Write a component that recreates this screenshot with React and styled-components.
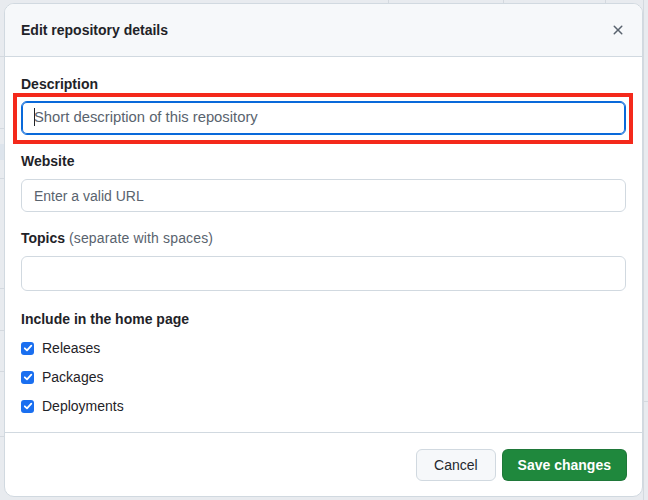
import React from "react";
import styled, { createGlobalStyle } from "styled-components";

const Global = createGlobalStyle`
  html, body { margin: 0; padding: 0; }
  body {
    font-family: "Liberation Sans", Arial, sans-serif;
    -webkit-font-smoothing: antialiased;
  }
  * { box-sizing: border-box; }
`;

const Page = styled.div`
  position: relative;
  width: 648px;
  height: 500px;
  overflow: hidden;
  background: #e8ebef;
  padding: 3px 5px 3px 4px;
  display: flex;
`;

const BgLine = styled.div`
  position: absolute;
  left: ${(p) => p.$x}px;
  top: ${(p) => p.$y}px;
  width: ${(p) => p.$w}px;
  height: ${(p) => p.$h || 1}px;
  background: ${(p) => p.$c || "#d4d9df"};
`;

const Modal = styled.div`
  position: relative;
  z-index: 1;
  flex: 1;
  display: flex;
  flex-direction: column;
  background: #ffffff;
  border: 1px solid #d1d9e0;
  border-radius: 10px;
  overflow: hidden;
  color: #1f2328;
`;

const Header = styled.header`
  height: 53px;
  flex: none;
  display: flex;
  align-items: center;
  justify-content: space-between;
  padding: 0 8px 0 16px;
  background: #f6f8fa;
  border-bottom: 1px solid #d1d9e0;
`;

const Title = styled.h1`
  margin: 0;
  font-size: 14px;
  font-weight: 700;
  line-height: 20px;
  color: #1f2328;
`;

const CloseButton = styled.button`
  width: 32px;
  height: 32px;
  border: 0;
  background: transparent;
  display: flex;
  align-items: center;
  justify-content: center;
  color: #59636e;
  padding: 0;
`;

const Body = styled.div`
  flex: 1;
  padding: 17px 16px 16px;
  display: flex;
  flex-direction: column;
`;

const Group = styled.div`
  display: flex;
  flex-direction: column;
  margin-bottom: ${(p) => p.$mb ?? 16}px;
`;

const Label = styled.label`
  font-size: 14px;
  font-weight: 700;
  line-height: 20px;
  color: #1f2328;
  margin-bottom: ${(p) => p.$mb ?? 8}px;
`;

const Hint = styled.span`
  font-weight: 400;
  color: #59636e;
  letter-spacing: 0.15px;
`;

const InputWrap = styled.div`
  position: relative;
  ${(p) =>
    p.$annotated &&
    `
    &::after {
      content: "";
      position: absolute;
      left: -8px;
      right: -7px;
      top: -8px;
      bottom: -9px;
      border: 4px solid #f4291b;
      pointer-events: none;
    }
  `}
`;

const Input = styled.input`
  display: block;
  width: 100%;
  height: ${(p) => p.$h || 33}px;
  padding: 0 12px ${(p) => (p.$focused ? 2 : 0)}px;
  font-family: inherit;
  font-size: ${(p) => p.$fs || 14}px;
  color: #1f2328;
  background: #ffffff;
  border: 1px solid ${(p) => (p.$focused ? "#0969da" : "#d1d9e0")};
  box-shadow: ${(p) => (p.$focused ? "inset 0 0 0 1px #0969da" : "none")};
  border-radius: 6px;
  outline: none;
  &::placeholder {
    color: #59636e;
    opacity: 1;
  }
`;

const Caret = styled.span`
  position: absolute;
  left: 13px;
  top: 7px;
  width: 1px;
  height: 18px;
  background: #1f2328;
`;

const CheckList = styled.div`
  display: flex;
  flex-direction: column;
  gap: 9px;
`;

const CheckRow = styled.label`
  display: flex;
  align-items: center;
  gap: 8px;
  height: 20px;
  font-size: 14px;
  color: #1f2328;
`;

const Box = styled.span`
  width: 13px;
  height: 13px;
  border-radius: 3px;
  background: #1a6ff0;
  display: flex;
  align-items: center;
  justify-content: center;
  flex: none;
`;

const Footer = styled.footer`
  flex: none;
  display: flex;
  justify-content: flex-end;
  gap: 6px;
  padding: 16px 15px 16px 16px;
  border-top: 1px solid #d1d9e0;
`;

const Button = styled.button`
  height: 32px;
  padding: 0 ${(p) => (p.$primary ? 15 : 17)}px;
  border-radius: 6px;
  font-family: inherit;
  font-size: 14px;
  font-weight: ${(p) => (p.$primary ? 700 : 500)};
  border: 1px solid ${(p) => (p.$primary ? "rgba(31,35,40,0.15)" : "#d1d9e0")};
  background: ${(p) => (p.$primary ? "#1f883d" : "#f6f8fa")};
  color: ${(p) => (p.$primary ? "#ffffff" : "#25292e")};
`;

const XIcon = () => (
  <svg width="16" height="16" viewBox="0 0 16 16" fill="currentColor">
    <path d="M3.72 3.72a.75.75 0 0 1 1.06 0L8 6.94l3.22-3.22a.749.749 0 0 1 1.275.326.749.749 0 0 1-.215.734L9.06 8l3.22 3.22a.749.749 0 0 1-.326 1.275.749.749 0 0 1-.734-.215L8 9.06l-3.22 3.22a.751.751 0 0 1-1.042-.018.751.751 0 0 1-.018-1.042L6.94 8 3.72 4.78a.75.75 0 0 1 0-1.06Z" />
  </svg>
);

const Check = () => (
  <svg width="10" height="10" viewBox="0 0 10 10" fill="none">
    <path d="M1.8 5.3 L4 7.4 L8.3 2.6" stroke="#fff" strokeWidth="1.8" strokeLinecap="round" strokeLinejoin="round" />
  </svg>
);

const options = ["Releases", "Packages", "Deployments"];

export default function App() {
  return (
    <>
      <Global />
      <Page>
        <BgLine $x={0} $y={56} $w={4} />
        <BgLine $x={0} $y={128} $w={4} />
        <BgLine $x={0} $y={144} $w={4} $h={16} $c="#dde4ec" />
        <BgLine $x={0} $y={178} $w={4} />
        <BgLine $x={0} $y={288} $w={4} />
        <BgLine $x={0} $y={330} $w={4} />
        <BgLine $x={0} $y={371} $w={4} />
        <BgLine $x={0} $y={436} $w={4} />
        <BgLine $x={643} $y={0} $w={1} $h={500} />
        <BgLine $x={643} $y={401} $w={5} />
        <BgLine $x={388} $y={0} $w={1} $h={3} />
        <BgLine $x={503} $y={0} $w={1} $h={3} />
        <BgLine $x={605} $y={0} $w={1} $h={3} />
        <Modal>
          <Header>
            <Title>Edit repository details</Title>
            <CloseButton aria-label="Close">
              <XIcon />
            </CloseButton>
          </Header>
          <Body>
            <Group>
              <Label $mb={7}>Description</Label>
              <InputWrap $annotated>
                <Input $focused $h={34} $fs={14.8} placeholder="Short description of this repository" />
                <Caret />
              </InputWrap>
            </Group>
            <Group>
              <Label $mb={8}>Website</Label>
              <InputWrap>
                <Input placeholder="Enter a valid URL" />
              </InputWrap>
            </Group>
            <Group $mb={18}>
              <Label $mb={8}>
                Topics <Hint>(separate with spaces)</Hint>
              </Label>
              <InputWrap>
                <Input $h={35} />
              </InputWrap>
            </Group>
            <Group $mb={0}>
              <Label $mb={9}>Include in the home page</Label>
              <CheckList>
                {options.map((o) => (
                  <CheckRow key={o}>
                    <Box>
                      <Check />
                    </Box>
                    {o}
                  </CheckRow>
                ))}
              </CheckList>
            </Group>
          </Body>
          <Footer>
            <Button>Cancel</Button>
            <Button $primary>Save changes</Button>
          </Footer>
        </Modal>
      </Page>
    </>
  );
}
